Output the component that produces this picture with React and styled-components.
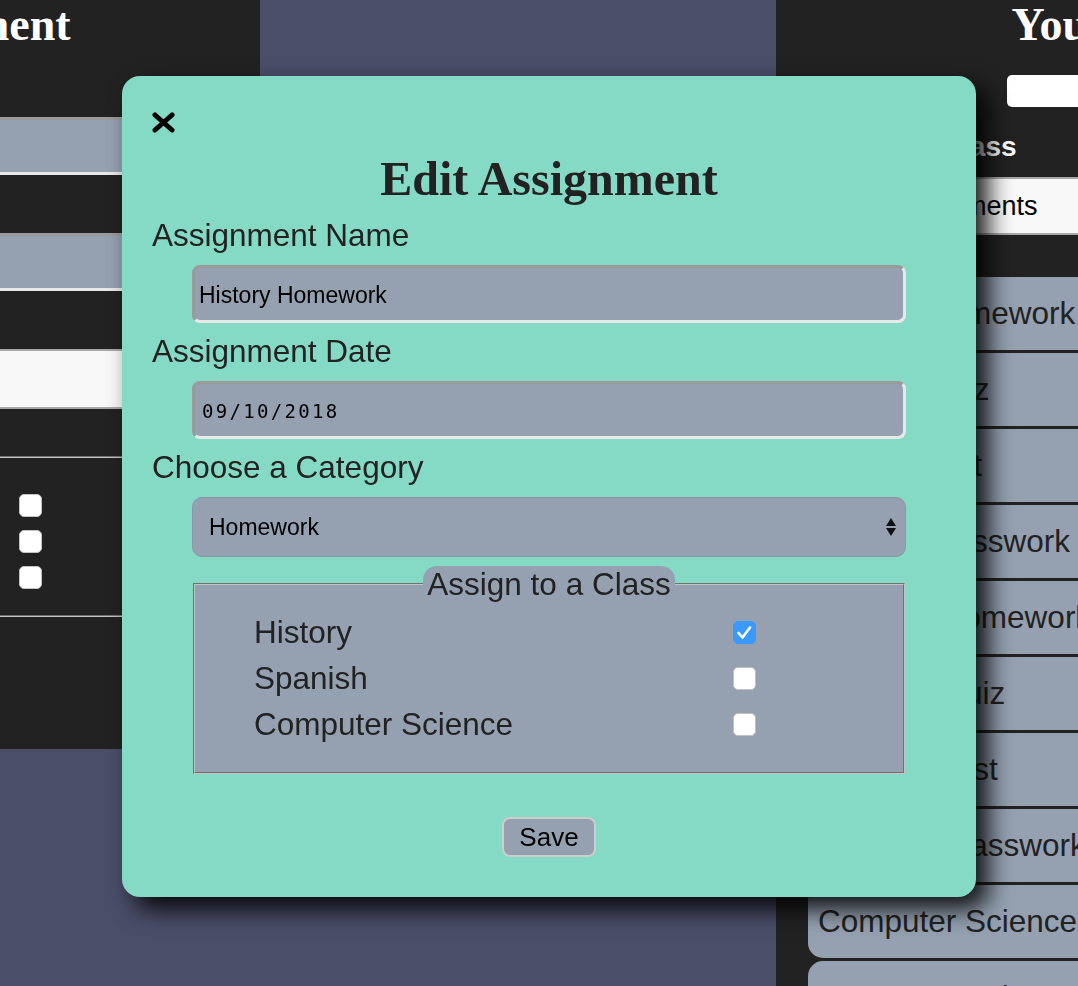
import styled, { createGlobalStyle } from 'styled-components';

const assignments = [
    'History Homework',
    'History Quiz',
    'History Test',
    'History Classwork',
    'Spanish Homework',
    'Spanish Quiz',
    'Spanish Test',
    'Spanish Classwork',
    'Computer Science Homework',
    'Computer Science Quiz',
];

const classes = [
    { name: 'History', checked: true },
    { name: 'Spanish', checked: false },
    { name: 'Computer Science', checked: false },
];

const categories = ['Homework', 'Quiz', 'Test', 'Classwork'];

const SelectArrows = () => (
    <ArrowIcon width="10" height="18" viewBox="0 0 10 18" aria-hidden="true">
        <polygon points="0,8 5,0 10,8" />
        <polygon points="0,10 10,10 5,18" />
    </ArrowIcon>
);

const ClassCheckbox = ({ checked }) => (
    <CheckBox role="checkbox" aria-checked={checked} $checked={checked}>
        {checked ? (
            <svg width="23" height="23" viewBox="0 0 23 23" aria-hidden="true">
                <polyline points="5.5,12 9.5,16.5 17,6.5" fill="none" stroke="#fff" strokeWidth="2.6" strokeLinecap="round" strokeLinejoin="round" />
            </svg>
        ) : null}
    </CheckBox>
);

const ClassFieldset = ({ dark, labelWidth, rowHeight, values }) => (
    <Fieldset $dark={dark}>
        <Legend $dark={dark}>Assign to a Class</Legend>
        {classes.map((c, i) => (
            <ClassRow key={c.name} $labelWidth={labelWidth} $rowHeight={rowHeight} $dark={dark}>
                <span>{c.name}</span>
                <ClassCheckbox checked={values ? values[i] : false} />
            </ClassRow>
        ))}
    </Fieldset>
);

const App = () => (
    <>
        <GlobalStyle />
        <Page>
            <LeftColumn>
                <Heading>Add Assignment</Heading>
                <FormBody>
                    <FieldLabel $light>Assignment Name</FieldLabel>
                    <TextInput type="text" readOnly value="" />
                    <FieldLabel $light>Assignment Date</FieldLabel>
                    <TextInput type="text" readOnly value="" $mono />
                    <FieldLabel $light>Choose a Category</FieldLabel>
                    <SelectWrap $gap={30} $indent={40}>
                        <Select $light defaultValue="">
                            <option value="">Choose one</option>
                            {categories.map((c) => <option key={c}>{c}</option>)}
                        </Select>
                        <SelectArrows />
                    </SelectWrap>
                    <ClassFieldset dark labelWidth={329} rowHeight={36} />
                    <SaveButton type="button">Add</SaveButton>
                </FormBody>
            </LeftColumn>

            <Gutter />

            <RightColumn>
                <Heading>Your Assignments</Heading>
                <SearchInput type="text" readOnly value="" aria-label="Search assignments" />
                <ClassLabel>Choose a Class</ClassLabel>
                <SelectWrap $gap={0} $indent={32} $right>
                    <Select $light $wide defaultValue="all">
                        <option value="all">All Assignments</option>
                        {classes.map((c) => <option key={c.name}>{c.name}</option>)}
                    </Select>
                </SelectWrap>
                <AssignmentList>
                    {assignments.map((a) => (
                        <AssignmentItem key={a}>{a}</AssignmentItem>
                    ))}
                </AssignmentList>
            </RightColumn>
        </Page>

        <Modal role="dialog" aria-label="Edit Assignment">
            <CloseButton type="button" aria-label="Close">
                <svg width="23" height="21" viewBox="0 0 23 21" aria-hidden="true">
                    <path d="M3 3 L20 18 M20 3 L3 18" stroke="#000" strokeWidth="5" strokeLinecap="round" />
                </svg>
            </CloseButton>
            <ModalTitle>Edit Assignment</ModalTitle>

            <FieldLabel>Assignment Name</FieldLabel>
            <TextInput type="text" readOnly value="History Homework" />

            <FieldLabel>Assignment Date</FieldLabel>
            <TextInput type="text" readOnly value="09/10/2018" $mono />

            <FieldLabel>Choose a Category</FieldLabel>
            <SelectWrap $gap={9} $indent={40}>
                <Select defaultValue="Homework">
                    {categories.map((c) => <option key={c}>{c}</option>)}
                </Select>
                <SelectArrows />
            </SelectWrap>

            <ClassFieldset labelWidth={479} rowHeight={46} values={classes.map((c) => c.checked)} />

            <SaveButton type="button">Save</SaveButton>
        </Modal>
    </>
);

const GlobalStyle = createGlobalStyle`
	* {
		box-sizing: border-box;
	}

	html,
	body {
		margin: 0;
		padding: 0;
		height: 100%;
		overflow: hidden;
	}

	body {
		background: #4a4e69;
		font-family: 'Liberation Sans', Arial, Helvetica, sans-serif;
	}
`;

const grey = '#95a1b1';
const ink = '#222';

const Page = styled.div`
	display: flex;
	align-items: flex-start;
	width: 100vw;
	height: 100vh;
	overflow: hidden;
`;

const LeftColumn = styled.section`
	flex: 0 0 702px;
	margin-left: -442px;
	padding: 0 30px 49px;
	background: ${ink};
`;

const Gutter = styled.div`
	flex: 0 0 516px;
`;

const RightColumn = styled.section`
	flex: 0 0 824px;
	min-height: 100vh;
	padding: 0 32px;
	background: ${ink};
`;

const Heading = styled.h1`
	margin: 0;
	font-family: 'Liberation Serif', 'Times New Roman', serif;
	font-size: 46px;
	line-height: 50px;
	font-weight: 700;
	color: #fff;
	text-align: center;
	white-space: nowrap;
`;

const FormBody = styled.form`
	padding-top: 19px;
`;

const FieldLabel = styled.label`
	display: block;
	margin: 0 0 12px;
	font-size: 31.5px;
	line-height: 36px;
	color: ${(p) => (p.$light ? '#fff' : ink)};
	white-space: nowrap;
`;

const TextInput = styled.input`
	display: block;
	width: calc(100% - 80px);
	height: 58px;
	margin: 0 40px 10px;
	padding: 2px ${(p) => (p.$mono ? '7px' : '4px')} 0;
	border: 3px solid;
	border-color: #9a9a9a #e8e8e8 #e8e8e8 #9a9a9a;
	border-radius: 8px;
	background: ${grey};
	color: #000;
	font-family: ${(p) => (p.$mono ? "'DejaVu Sans Mono', 'Liberation Mono', monospace" : "'Liberation Sans', Arial, sans-serif")};
	font-size: ${(p) => (p.$mono ? '19px' : '23px')};
	letter-spacing: ${(p) => (p.$mono ? '2.3px' : '0')};
	outline: none;
`;

const SelectWrap = styled.div`
	position: relative;
	margin: 0 ${(p) => (p.$right ? 0 : p.$indent)}px ${(p) => p.$gap}px ${(p) => p.$indent}px;
`;

const Select = styled.select`
	display: block;
	width: 100%;
	height: ${(p) => (p.$light ? (p.$wide ? 58 : 60) : 60)}px;
	padding: 0 ${(p) => (p.$light ? '5px' : '16px')};
	appearance: none;
	border: ${(p) => (p.$light ? '2px solid #a8a8a8' : '1px solid #8c96a4')};
	border-radius: ${(p) => (p.$light ? '0' : '10px')};
	background: ${(p) => (p.$light ? '#f8f8f8' : grey)};
	color: #000;
	font-family: 'Liberation Sans', Arial, sans-serif;
	font-size: ${(p) => (p.$wide ? '27px' : '23px')};
	outline: none;
`;

const ArrowIcon = styled.svg`
	position: absolute;
	right: 10px;
	top: 50%;
	transform: translateY(-50%);
	fill: #111;
	pointer-events: none;
`;

const Fieldset = styled.fieldset`
	min-width: 0;
	margin: 0 41px;
	padding: ${(p) => (p.$dark ? '12px 0 20px' : '7px 0 25px')};
	border: 2px groove #c4c4c4;
	background: ${(p) => (p.$dark ? 'transparent' : grey)};
`;

const Legend = styled.legend`
	margin: ${(p) => (p.$dark ? '0' : '0 auto')};
	padding: 0 4px;
	border-radius: 14px 14px 0 0;
	background: ${grey};
	color: ${ink};
	font-size: 31.5px;
	line-height: 36px;
	white-space: nowrap;
`;

const ClassRow = styled.div`
	display: grid;
	grid-template-columns: ${(p) => p.$labelWidth}px 23px;
	align-items: center;
	height: ${(p) => p.$rowHeight}px;
	padding-left: 59px;
	font-size: 31.5px;
	color: ${(p) => (p.$dark ? '#fff' : ink)};
	white-space: nowrap;
`;

const CheckBox = styled.span`
	display: flex;
	align-items: center;
	justify-content: center;
	width: 23px;
	height: 23px;
	border-radius: 5px;
	border: 1px solid ${(p) => (p.$checked ? '#3b99fc' : '#c2c2c2')};
	background: ${(p) => (p.$checked ? '#3b99fc' : '#fff')};

	svg {
		margin: -1px;
	}
`;

const SaveButton = styled.button`
	display: block;
	width: 94px;
	height: 40px;
	margin: 43px auto 0;
	padding: 0;
	border: 2px solid #cdcdcd;
	border-radius: 8px;
	background: ${grey};
	color: #000;
	font-family: 'Liberation Sans', Arial, sans-serif;
	font-size: 26px;
	line-height: 1;
`;

const SearchInput = styled.input`
	display: block;
	width: 362px;
	height: 32px;
	margin: 25px auto 0;
	border: none;
	border-radius: 5px;
	background: #fff;
	outline: none;
`;

const ClassLabel = styled.label`
	display: block;
	margin: 24px 0 14px;
	font-size: 28px;
	line-height: 32px;
	font-weight: 700;
	color: #fff;
	white-space: nowrap;
`;

const AssignmentList = styled.ul`
	list-style: none;
	margin: 42px 0 0;
	padding: 0;
`;

const AssignmentItem = styled.li`
	display: flex;
	align-items: center;
	height: 73px;
	margin-bottom: 3px;
	padding-left: 10px;
	border-radius: 15px;
	background: ${grey};
	color: ${ink};
	font-size: 31.5px;
	white-space: nowrap;
`;

const Modal = styled.div`
	position: fixed;
	top: 76px;
	left: 122px;
	width: 854px;
	padding: 34px 30px 40px;
	border-radius: 18px;
	background: #85dac6;
	box-shadow: 12px 12px 24px rgba(0, 0, 0, 0.9);
`;

const CloseButton = styled.button`
	display: flex;
	align-items: center;
	width: 23px;
	height: 25px;
	padding: 0;
	border: none;
	background: none;
	cursor: pointer;
`;

const ModalTitle = styled.h2`
	margin: 16px 0 11px;
	font-family: 'Liberation Serif', 'Times New Roman', serif;
	font-size: 48px;
	line-height: 55px;
	font-weight: 700;
	color: ${ink};
	text-align: center;
`;

export default App;
